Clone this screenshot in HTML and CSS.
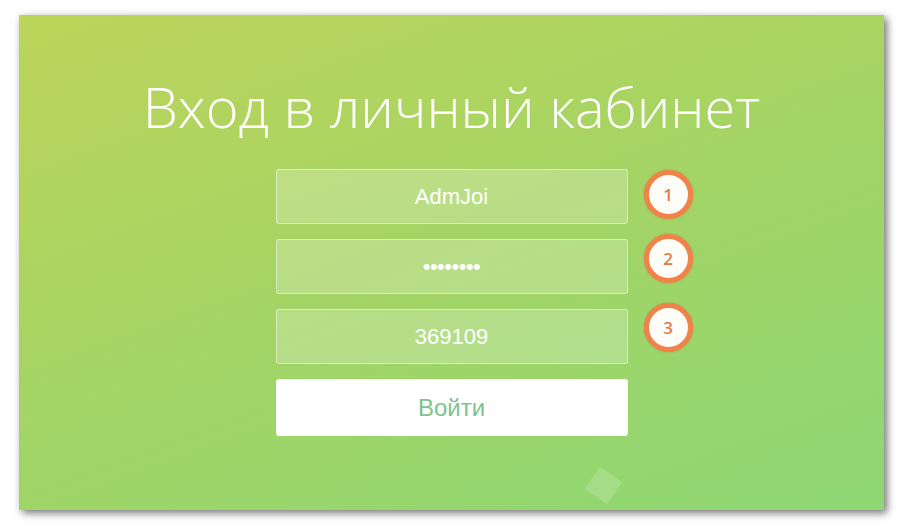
FILE: index.html
```html
<!DOCTYPE html>
<html lang="ru">
<head>
<meta charset="utf-8">
<title>Вход в личный кабинет</title>
<link rel="stylesheet" href="styles.css">
</head>
<body>
<div class="panel">
  <h1 class="title">Вход в личный кабинет</h1>
  <form class="form">
    <div class="row">
      <div class="field">AdmJoi</div>
      <span class="badge badge-1">1</span>
    </div>
    <div class="row">
      <div class="field field-pass">••••••••</div>
      <span class="badge badge-2">2</span>
    </div>
    <div class="row">
      <div class="field">369109</div>
      <span class="badge badge-3">3</span>
    </div>
    <div class="row">
      <button type="button" class="submit">Войти</button>
    </div>
  </form>
  <div class="diamond"></div>
</div>
</body>
</html>
```
FILE: styles.css
```css
html, body {
  margin: 0;
  padding: 0;
  background: #ffffff;
}

body {
  width: 902px;
  height: 527px;
  overflow: hidden;
}

.panel {
  position: relative;
  margin: 15px 0 0 19px;
  width: 865px;
  height: 495px;
  box-sizing: border-box;
  background: linear-gradient(160deg, #bdd45a 0%, #a6d464 45%, #8dd774 100%);
  box-shadow: 3px 3px 8px rgba(0, 0, 0, 0.55);
  display: flex;
  flex-direction: column;
  align-items: center;
  overflow: hidden;
}

.title {
  margin: 51px 0 0 0;
  font-family: "Open Sans", "Noto Sans", sans-serif;
  font-weight: 300;
  font-size: 56px;
  line-height: 80px;
  color: #ffffff;
  letter-spacing: 0;
}

.form {
  margin-top: 23px;
  display: flex;
  flex-direction: column;
  gap: 15px;
}

.row {
  position: relative;
  width: 352px;
}

.field {
  height: 55px;
  box-sizing: border-box;
  border: 1px solid rgba(255, 255, 255, 0.45);
  border-radius: 3px;
  background: rgba(255, 255, 255, 0.22);
  color: #ffffff;
  font-family: "Liberation Sans", Arial, sans-serif;
  font-size: 22px;
  display: flex;
  align-items: center;
  justify-content: center;
}

.field-pass {
  font-size: 22px;
  letter-spacing: -0.5px;
}

.submit {
  width: 352px;
  height: 57px;
  border: 0;
  border-radius: 3px;
  background: #ffffff;
  color: #7cc38e;
  font-family: "Liberation Sans", Arial, sans-serif;
  font-size: 24px;
  padding: 0;
}

.badge {
  position: absolute;
  left: 368px;
  width: 49px;
  height: 49px;
  box-sizing: border-box;
  border: 5px solid #f0824a;
  border-radius: 50%;
  background: #fffdf8;
  color: #e07a4d;
  font-family: "Open Sans", "Noto Sans", sans-serif;
  font-weight: 600;
  font-size: 17px;
  display: flex;
  align-items: center;
  justify-content: center;
  box-shadow: 0 0 2px rgba(200, 90, 40, 0.5);
}

.badge-1 {
  top: 1px;
}

.badge-2 {
  top: -5px;
}

.badge-3 {
  top: -6px;
}

.diamond {
  position: absolute;
  left: 571px;
  top: 457px;
  width: 27px;
  height: 27px;
  background: rgba(255, 255, 255, 0.16);
  transform: rotate(35deg);
}
```
